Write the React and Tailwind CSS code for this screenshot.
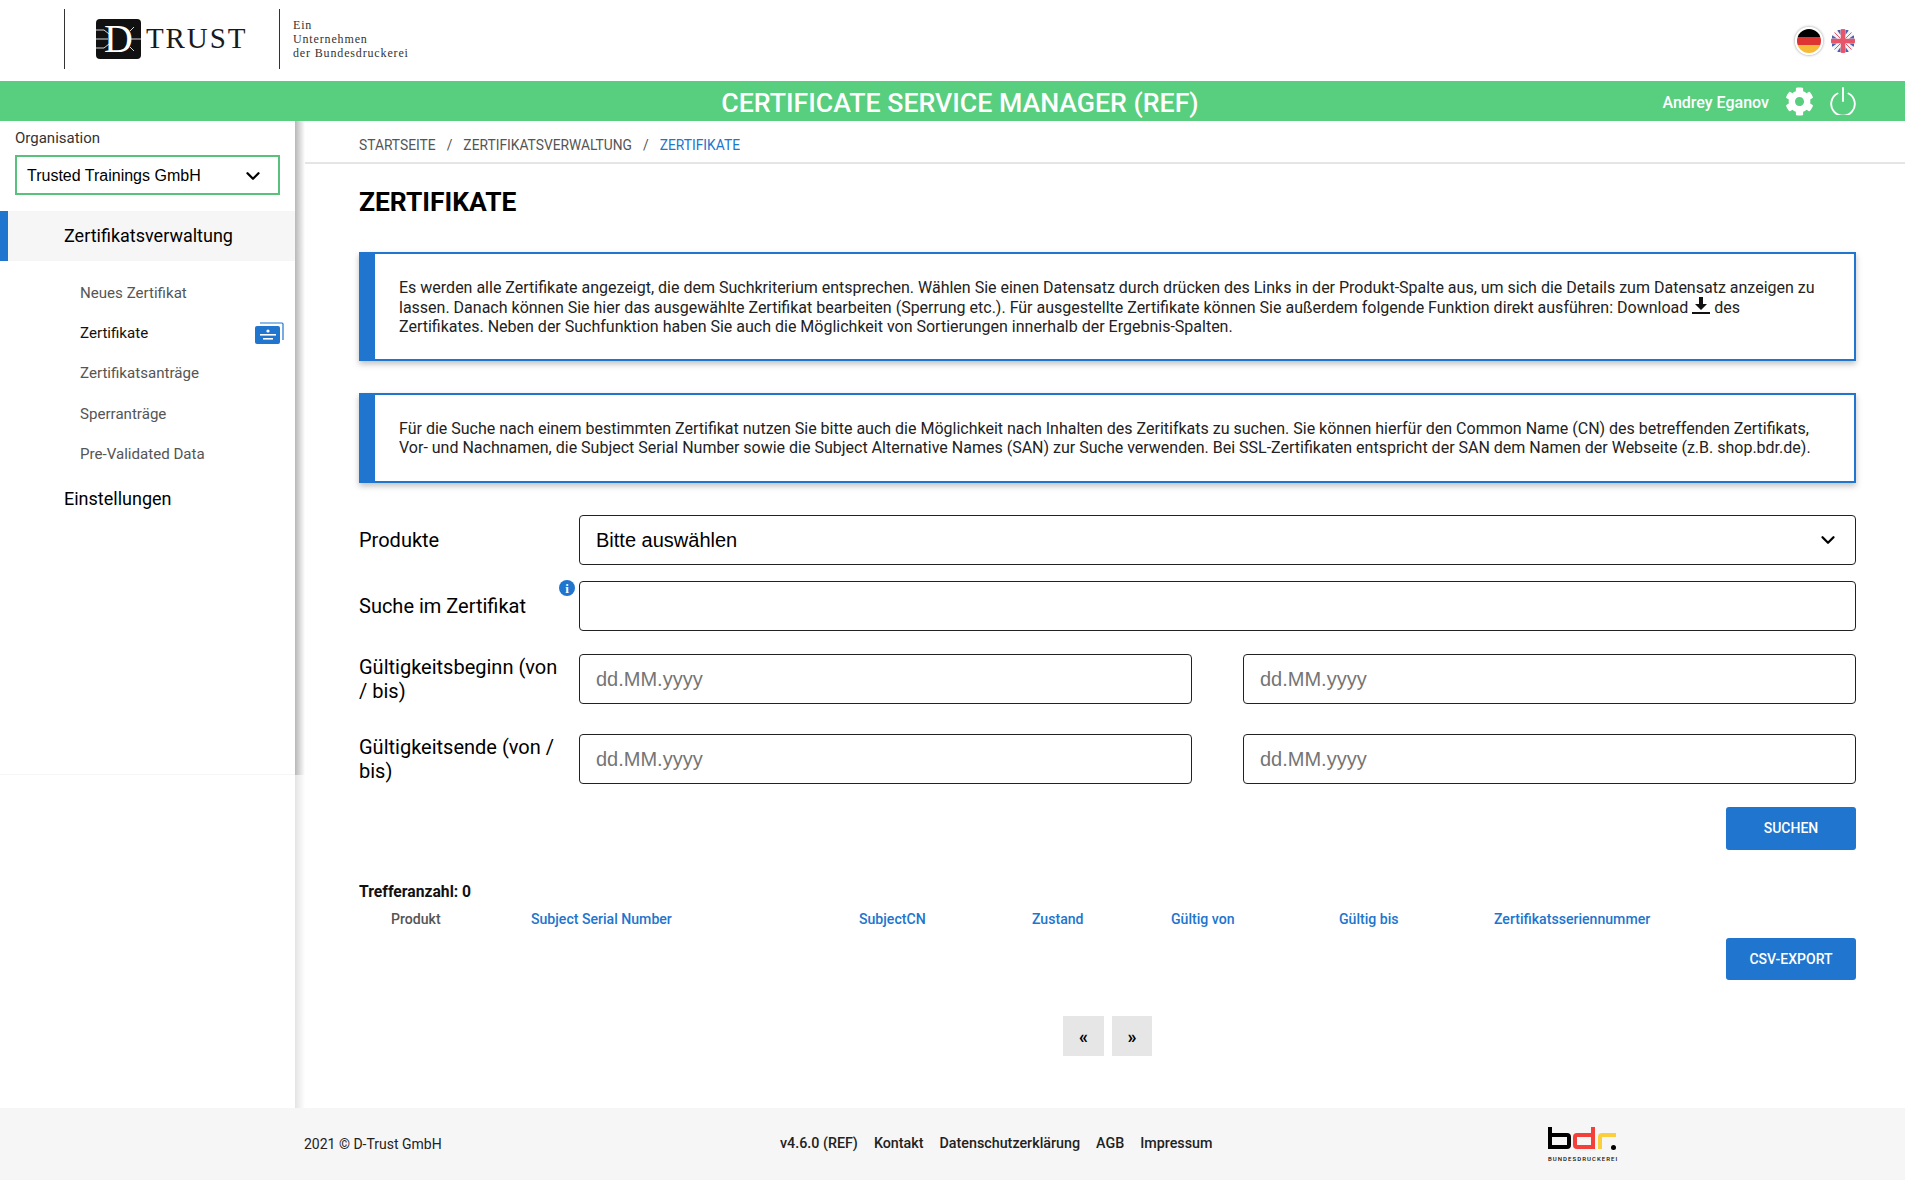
import React from 'react';
import { ChevronDown } from 'lucide-react';
import { FaCog } from 'react-icons/fa';

const subItems = [
    { label: 'Neues Zertifikat' },
    { label: 'Zertifikate', active: true },
    { label: 'Zertifikatsanträge' },
    { label: 'Sperranträge' },
    { label: 'Pre-Validated Data' },
];

const columns = [
    { label: 'Produkt', width: 'w-[140px]', cls: 'text-[#555555]' },
    { label: 'Subject Serial Number', width: 'w-[328px]', cls: 'text-[#2075ce]' },
    { label: 'SubjectCN', width: 'w-[173px]', cls: 'text-[#2075ce]' },
    { label: 'Zustand', width: 'w-[139px]', cls: 'text-[#2075ce]' },
    { label: 'Gültig von', width: 'w-[168px]', cls: 'text-[#2075ce]' },
    { label: 'Gültig bis', width: 'w-[155px]', cls: 'text-[#2075ce]' },
    { label: 'Zertifikatsseriennummer', width: 'w-[170px]', cls: 'text-[#2075ce]' },
];

const DTrustLogo = () => (
    <div className="flex items-center">
        <div className="relative flex h-[40px] w-[45px] items-center justify-center rounded-[4px] bg-[#111111]">
            <svg className="absolute inset-0" width="45" height="40" viewBox="0 0 45 40" fill="none" stroke="#d8d8d8" strokeWidth="1">
                <path d="M0 11h8l5 4M0 20h12M0 29h8l5-4M34 12l4-4M33 20h12M34 28l4 4" />
            </svg>
            <span className="relative font-['Liberation_Serif',serif] text-[40px] leading-none text-white">D</span>
        </div>
        <span className="ml-[5px] font-['Liberation_Serif',serif] text-[29px] leading-none tracking-[1.9px] text-[#1a1a1a]">TRUST</span>
    </div>
);

const GermanFlag = () => (
    <div className="flex h-[28px] w-[28px] flex-col overflow-hidden rounded-full border-2 border-white shadow-[0_0_3px_rgba(0,0,0,0.45)]">
        <div className="flex-1 bg-black" />
        <div className="flex-1 bg-[#dd3333]" />
        <div className="flex-1 bg-[#f5bb38]" />
    </div>
);

const UkFlag = () => (
    <svg width="24" height="24" viewBox="0 0 24 24">
        <defs>
            <clipPath id="uk-clip">
                <circle cx="12" cy="12" r="12" />
            </clipPath>
        </defs>
        <g clipPath="url(#uk-clip)">
            <rect width="24" height="24" fill="#f3f3f6" />
            <path d="M6 1h3.5v5zM1 6l5 3.5H1zM18 1h-3.5v5zM23 6l-5 3.5h5zM6 23h3.5v-5zM1 18l5-3.5H1zM18 23h-3.5v-5zM23 18l-5-3.5h5z" fill="#4a62ad" />
            <path d="M3 3l6.5 6.5M21 3l-6.5 6.5M3 21l6.5-6.5M21 21l-6.5-6.5" stroke="#e5566a" strokeWidth="1" />
            <path d="M12 0v24M0 12h24" stroke="#e5566a" strokeWidth="4.5" />
        </g>
    </svg>
);

const PowerIcon = () => (
    <svg width="26" height="28" viewBox="0 0 26 28" fill="none" stroke="#ffffff" strokeWidth="1.9" strokeLinecap="round">
        <path d="M13 1v13" />
        <path d="M7.5 6.5a11.8 11.8 0 1 0 11 0" />
    </svg>
);

const CertIcon = () => (
    <svg width="29" height="22" viewBox="0 0 29 22">
        <path d="M5 1h22a1 1 0 0 1 1 1v16" fill="none" stroke="#2075ce" strokeWidth="1.2" />
        <rect x="0" y="4" width="25" height="18" rx="2" fill="#2075ce" />
        <circle cx="13" cy="9" r="1.6" fill="#ffffff" />
        <rect x="5" y="12" width="16" height="1.6" fill="#ffffff" />
        <rect x="8" y="16" width="10" height="1.6" fill="#ffffff" />
    </svg>
);

const BdrLogo = () => (
    <div className="flex flex-col items-start">
        <svg width="68" height="24" viewBox="0 0 68 24" fill="none" strokeWidth="4">
            <path d="M2 0v20h17a2 2 0 0 0 2-2V10a2 2 0 0 0-2-2H3" stroke="#000000" />
            <path d="M45 0v20H29a2 2 0 0 1-2-2V10a2 2 0 0 1 2-2h15" stroke="#f4403a" />
            <path d="M52 22V10a2 2 0 0 1 2-2h14" stroke="#fbcf3c" />
            <circle cx="65.5" cy="20.5" r="2.5" fill="#000000" stroke="none" />
        </svg>
        <span className="mt-[5px] w-[68px] font-['Roboto',sans-serif] text-[6px] font-medium leading-none tracking-[1.05px] whitespace-nowrap text-[#111111]">BUNDESDRUCKEREI</span>
    </div>
);

const TextField = ({ placeholder, className = '' }) => (
    <input
        placeholder={placeholder}
        className={`h-[50px] min-w-0 flex-1 rounded-[4px] border border-[#222222] bg-white px-4 font-['Liberation_Sans',sans-serif] text-[20px] text-black placeholder:text-[#757575] ${className}`}
    />
);

const InfoBox = ({ className, children }) => (
    <div className={`flex items-center border-2 border-l-[16px] border-[#2075ce] pl-[24px] pr-[30px] text-[16px] leading-[19px] text-[#222222] shadow-[0_3px_6px_rgba(0,0,0,0.25)] ${className}`}>
        <p>{children}</p>
    </div>
);

const App = () => {
    return (
        <div className="flex h-[1199px] flex-col bg-white font-['Roboto',sans-serif] text-black">
            <header className="flex h-[81px] items-center pb-[4px] pl-[64px] pr-[50px]">
                <div className="flex h-[60px] w-[215px] items-center border-l border-[#333333] pl-[31px]">
                    <DTrustLogo />
                </div>
                <div className="flex h-[60px] flex-col justify-center border-l border-[#333333] pl-[13px] font-['Liberation_Serif',serif] text-[12px] leading-[14px] tracking-[0.85px] text-[#333333]">
                    <span>Ein</span>
                    <span>Unternehmen</span>
                    <span>der Bundesdruckerei</span>
                </div>
                <div className="ml-auto flex items-center gap-[8px] pt-[4px]">
                    <GermanFlag />
                    <UkFlag />
                </div>
            </header>

            <div className="relative flex h-[40px] items-center justify-end bg-[#58ce7f] pr-[49px] text-white">
                <h1 className="absolute inset-x-0 top-0 pl-[15px] text-center text-[26.7px] font-medium leading-[44px]">CERTIFICATE SERVICE MANAGER (REF)</h1>
                <span className="relative pt-[3px] text-[16px] font-medium">Andrey Eganov</span>
                <FaCog className="relative ml-[16px] text-[29px]" />
                <div className="relative ml-[16px]"><PowerIcon /></div>
            </div>

            <div className="flex min-h-0 flex-1">
                <aside className="relative w-[295px] shrink-0">
                    {/* shadow strips right of the sidebar */}
                    <div className="absolute left-full top-0 h-full w-[10px] bg-linear-to-r from-[#e4e4e4] to-[#ffffff]" />
                    <div className="absolute left-full top-0 h-[654px] w-[10px] bg-linear-to-r from-[#b8b8b8] to-[#ffffff]" />

                    <div className="h-[654px] border-b border-[#f6f6f6] pt-[7px]">
                        <div className="px-[15px] text-[15px] leading-[20px] text-[#333333]">Organisation</div>
                        <div className="mx-[15px] mt-[7px] flex h-[40px] w-[265px] items-center justify-between border-2 border-[#58c17c] pl-[10px] pr-[14px] pt-[1px] font-['Liberation_Sans',sans-serif] text-[16px]">
                            <span>Trusted Trainings GmbH</span>
                            <ChevronDown size={22} strokeWidth={2.5} />
                        </div>
                        <div className="mt-[16px] flex h-[50px] items-center border-l-[8px] border-[#2075ce] bg-[#f6f6f6] pb-[2px] pl-[56px] text-[18px]">
                            Zertifikatsverwaltung
                        </div>
                        <ul className="mt-[12px]">
                            {subItems.map((item) => (
                                <li key={item.label} className={`flex h-[40.3px] items-center justify-between pl-[80px] pr-[11px] text-[15.1px] ${item.active ? 'text-[#111111]' : 'text-[#555555]'}`}>
                                    <span>{item.label}</span>
                                    {item.active && <CertIcon />}
                                </li>
                            ))}
                        </ul>
                        <div className="mt-[10px] pl-[64px] text-[18px] leading-[30px]">Einstellungen</div>
                    </div>
                </aside>

                <main className="min-w-0 flex-1">
                    <nav className="flex h-[43px] items-center gap-[11px] border-b-2 border-[#e5e5e5] pl-[64px] pt-[7px] text-[13.8px] text-[#555555]">
                        <span>STARTSEITE</span>
                        <span>/</span>
                        <span>ZERTIFIKATSVERWALTUNG</span>
                        <span>/</span>
                        <span className="text-[#2075ce]">ZERTIFIKATE</span>
                    </nav>

                    <div className="pl-[64px] pr-[49px]">
                        <h2 className="mt-[20px] text-[26.4px] font-bold leading-[36px]">ZERTIFIKATE</h2>

                        <InfoBox className="mt-[32px] h-[109px]">
                            Es werden alle Zertifikate angezeigt, die dem Suchkriterium entsprechen. Wählen Sie einen Datensatz durch drücken des Links in der Produkt-Spalte aus, um sich die Details zum Datensatz anzeigen zu lassen. Danach können Sie hier das ausgewählte Zertifikat bearbeiten (Sperrung etc.). Für ausgestellte Zertifikate können Sie außerdem folgende Funktion direkt ausführen: Download{' '}
                            <svg className="inline-block align-[-2px]" width="18" height="18" viewBox="0 0 18 18" fill="#111111">
                                <path d="M7 0h4v7h4l-6 6-6-6h4z" />
                                <path d="M0 15h18v2H0z" />
                            </svg>{' '}
                            des Zertifikates. Neben der Suchfunktion haben Sie auch die Möglichkeit von Sortierungen innerhalb der Ergebnis-Spalten.
                        </InfoBox>
                        <InfoBox className="mt-[32px] h-[90px]">
                            Für die Suche nach einem bestimmten Zertifikat nutzen Sie bitte auch die Möglichkeit nach Inhalten des Zeritifkats zu suchen. Sie können hierfür den Common Name (CN) des betreffenden Zertifikats, Vor- und Nachnamen, die Subject Serial Number sowie die Subject Alternative Names (SAN) zur Suche verwenden. Bei SSL-Zertifikaten entspricht der SAN dem Namen der Webseite (z.B. shop.bdr.de).
                        </InfoBox>

                        <div className="mt-[32px] flex items-center">
                            <label className="w-[220px] text-[20px]">Produkte</label>
                            <div className="flex h-[50px] flex-1 items-center justify-between rounded-[4px] border border-[#222222] pl-4 pr-[16px] font-['Liberation_Sans',sans-serif] text-[20px]">
                                <span>Bitte auswählen</span>
                                <ChevronDown size={22} strokeWidth={2.5} />
                            </div>
                        </div>

                        <div className="mt-[16px] flex items-center">
                            <label className="relative h-full w-[220px] text-[20px]">
                                Suche im Zertifikat
                                <span className="absolute right-[4px] top-[-11px] flex h-[16px] w-[16px] items-center justify-center rounded-full bg-[#2075ce] font-['Liberation_Serif',serif] text-[13px] font-bold leading-none text-white">i</span>
                            </label>
                            <TextField />
                        </div>

                        <div className="mt-[23px] flex items-center">
                            <label className="w-[220px] pr-[20px] text-[20px] leading-[24px]">Gültigkeitsbeginn (von / bis)</label>
                            <div className="flex flex-1 gap-[51px]">
                                <TextField placeholder="dd.MM.yyyy" />
                                <TextField placeholder="dd.MM.yyyy" />
                            </div>
                        </div>

                        <div className="mt-[30px] flex items-center">
                            <label className="w-[220px] pr-[20px] text-[20px] leading-[24px]">Gültigkeitsende (von / bis)</label>
                            <div className="flex flex-1 gap-[51px]">
                                <TextField placeholder="dd.MM.yyyy" />
                                <TextField placeholder="dd.MM.yyyy" />
                            </div>
                        </div>

                        <div className="mt-[23px] flex justify-end">
                            <button className="h-[43px] w-[130px] rounded-[3px] bg-[#2075ce] text-[14px] font-medium text-white">SUCHEN</button>
                        </div>

                        <div className="mt-[32px] text-[15.7px] font-bold leading-[20px] text-[#111111]">Trefferanzahl: 0</div>
                        <div className="mt-[7px] flex pl-[32px] text-[14.1px] font-medium leading-[20px]">
                            {columns.map((col) => (
                                <span key={col.label} className={`${col.width} whitespace-nowrap ${col.cls}`}>{col.label}</span>
                            ))}
                        </div>

                        <div className="mt-[9px] flex justify-end">
                            <button className="h-[42px] w-[130px] rounded-[3px] bg-[#2075ce] text-[14px] font-medium text-white">CSV-EXPORT</button>
                        </div>

                        <div className="mt-[36px] flex gap-[8px] pl-[704px]">
                            <button className="h-[40px] w-[41px] bg-[#e6e6e6] text-[18px] font-bold">«</button>
                            <button className="h-[40px] w-[40px] bg-[#e6e6e6] text-[18px] font-bold">»</button>
                        </div>
                    </div>
                </main>
            </div>

            <footer className="flex h-[72px] items-center bg-[#f6f6f6] pl-[304px] text-[14px] text-[#222222]">
                <span className="w-[476px]">2021 © D-Trust GmbH</span>
                <div className="flex w-[768px] gap-[16px] text-[14.3px] font-medium">
                    <span>v4.6.0 (REF)</span>
                    <span>Kontakt</span>
                    <span>Datenschutzerklärung</span>
                    <span>AGB</span>
                    <span>Impressum</span>
                </div>
                <BdrLogo />
            </footer>
            <div className="h-[19px] shrink-0 bg-white" />
        </div>
    );
};

export default App;
